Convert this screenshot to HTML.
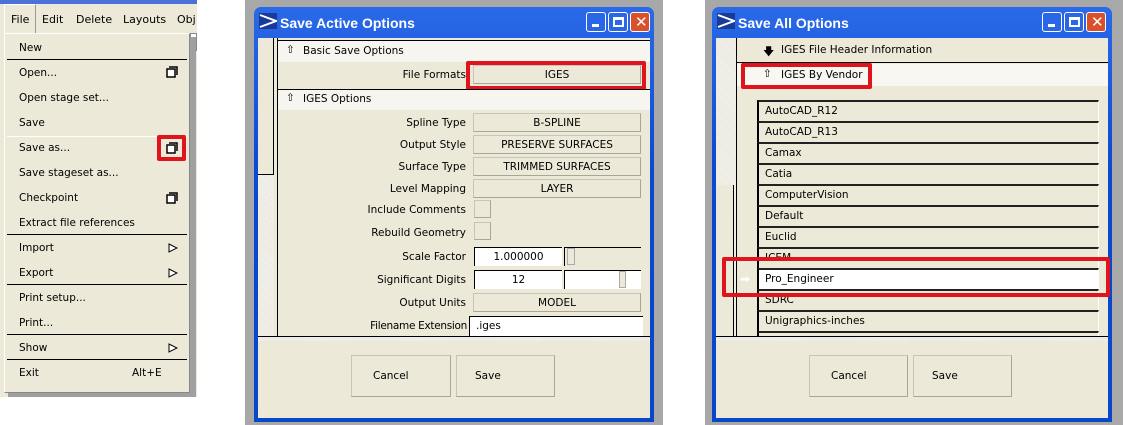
<!DOCTYPE html>
<html><head><meta charset="utf-8"><style>
*{box-sizing:border-box;margin:0;padding:0}
body{width:1123px;height:425px;background:#fff;position:relative;overflow:hidden;font-family:"DejaVu Sans","Liberation Sans",sans-serif;font-size:10.5px;color:#000}
.a{position:absolute}
.t{position:absolute;white-space:nowrap}
.menu .t{left:19px}
.sep{position:absolute;left:7px;width:180px;height:1px;background:#000}
.frame{background:#a8a8a8}
.win{background:linear-gradient(#2a6ae8,#0a49d0 40%,#0848c8);border-radius:7px 7px 0 0}
.title{color:#fff;font-weight:bold;font-family:"Liberation Sans",sans-serif;font-size:14px}
.body{background:#ece9d8}
.btn{position:absolute;background:#ece9d8;border:1px solid #c8c5b8;border-right-color:#a9a697;border-bottom-color:#a9a697;text-align:center}
.lbl{position:absolute;left:278px;width:188px;text-align:right;white-space:nowrap}
.red{position:absolute;border:4px solid #e0141c;border-radius:2px}
.tb{position:absolute;width:20px;height:20px;border:1px solid #fff;border-radius:3px;background:#2a66e8}
.li{position:absolute;left:757px;width:342px;height:21px;border-left:2px solid #000;border-top:2px solid #222;border-right:1px solid #fff;background:#ece9d8;padding:3px 0 0 6px}
.hatch{background:repeating-linear-gradient(45deg,#e8e6dc 0 1px,#f4f3ee 1px 2px)}
</style></head><body>

<!-- LEFT MENU -->
<div class="a" style="left:0;top:0;width:197px;height:397px;background:#ece9d8"></div>
<div class="a" style="left:0;top:0;width:197px;height:4px;background:#4a72d8"></div>
<div class="a" style="left:4px;top:4px;width:32px;height:29px;border:1px solid #fff;border-right-color:#999;border-bottom:none"></div>
<div class="t" style="left:11px;top:13px;font-size:11px">File</div>
<div class="t" style="left:42px;top:13px;font-size:11px">Edit</div>
<div class="t" style="left:76px;top:13px;font-size:11px">Delete</div>
<div class="t" style="left:123px;top:13px;font-size:11px">Layouts</div>
<div class="t" style="left:177px;top:13px;font-size:11px">Obj</div>
<div class="a" style="left:190px;top:33px;width:7px;height:18px;background:#fff;border:1px solid #888"></div>
<div class="a" style="left:8px;top:37px;width:188px;height:360px;background:#a0a0a0"></div>
<div class="a menu" style="left:4px;top:33px;width:186px;height:360px;background:#ece9d8;border:1px solid #fff;border-right-color:#888;border-bottom-color:#888">
</div>
<div class="menu">
<div class="t" style="top:42px">New</div>
<div class="sep" style="top:59px"></div>
<div class="t" style="top:67px">Open...</div>
<div class="t" style="top:92px">Open stage set...</div>
<div class="t" style="top:117px">Save</div>
<div class="sep" style="top:136px;background:#fff"></div>
<div class="t" style="top:142px">Save as...</div>
<div class="t" style="top:167px">Save stageset as...</div>
<div class="t" style="top:192px">Checkpoint</div>
<div class="t" style="top:217px">Extract file references</div>
<div class="sep" style="top:234px"></div>
<div class="t" style="top:242px">Import</div>
<div class="t" style="top:267px">Export</div>
<div class="sep" style="top:284px"></div>
<div class="t" style="top:292px">Print setup...</div>
<div class="t" style="top:317px">Print...</div>
<div class="sep" style="top:334px"></div>
<div class="t" style="top:342px">Show</div>
<div class="sep" style="top:359px"></div>
<div class="t" style="top:367px">Exit</div>
<div class="t" style="left:132px!important;top:367px">Alt+E</div>
</div>
<svg class="a" style="left:166px;top:66px" width="12" height="12"><rect x="1" y="3" width="8" height="8" fill="#fff" stroke="#000" stroke-width="1.5"/><path d="M3 1H11V9" fill="none" stroke="#000" stroke-width="1.5"/></svg>
<svg class="a" style="left:166px;top:142px" width="12" height="12"><rect x="1" y="3" width="8" height="8" fill="#fff" stroke="#000" stroke-width="1.5"/><path d="M3 1H11V9" fill="none" stroke="#000" stroke-width="1.5"/></svg>
<svg class="a" style="left:166px;top:192px" width="12" height="12"><rect x="1" y="3" width="8" height="8" fill="#fff" stroke="#000" stroke-width="1.5"/><path d="M3 1H11V9" fill="none" stroke="#000" stroke-width="1.5"/></svg>
<svg class="a" style="left:168px;top:243px" width="10" height="10"><path d="M1 1L9 5L1 9Z" fill="#fff" stroke="#000"/></svg>
<svg class="a" style="left:168px;top:268px" width="10" height="10"><path d="M1 1L9 5L1 9Z" fill="#fff" stroke="#000"/></svg>
<svg class="a" style="left:168px;top:343px" width="10" height="10"><path d="M1 1L9 5L1 9Z" fill="#fff" stroke="#000"/></svg>
<div class="red" style="left:157px;top:135px;width:29px;height:26px"></div>

<!-- DIALOG 1 -->
<div class="a frame" style="left:245px;top:0;width:418px;height:425px"></div>
<div class="a win" style="left:254px;top:7px;width:400px;height:415px"></div>
<svg class="a" style="left:259px;top:13px" width="18" height="16"><rect width="18" height="16" fill="#1a3a9a"/><path d="M1 2L17 8L1 14" fill="none" stroke="#fff" stroke-width="2"/></svg>
<div class="t title" style="left:280px;top:15px">Save Active Options</div>
<div class="tb" style="left:586px;top:12px"><div class="a" style="left:5px;top:11px;width:7px;height:3px;background:#fff"></div></div>
<div class="tb" style="left:608px;top:12px"><div class="a" style="left:4px;top:4px;width:11px;height:10px;border:2px solid #fff;border-top-width:3px"></div></div>
<div class="tb" style="left:630px;top:12px;background:#d9502a"><div class="t" style="left:4px;top:0;color:#fff;font-size:15px;font-family:'Liberation Sans'">✕</div></div>
<div class="a body" style="left:258px;top:38px;width:392px;height:380px"></div>
<div class="a hatch" style="left:258px;top:38px;width:16px;height:300px"></div>
<div class="a" style="left:258px;top:38px;width:16px;height:137px;border-right:1px solid #000;border-bottom:1px solid #000;background:#ece9d8"></div>
<div class="a" style="left:277px;top:38px;width:1px;height:300px;background:#000"></div>
<div class="a" style="left:278px;top:40px;width:372px;height:22px;background:#f6f5f0;border-top:1px solid #000"></div>
<div class="t" style="left:286px;top:44px">⇧</div>
<div class="t" style="left:303px;top:45px">Basic Save Options</div>
<div class="lbl" style="top:69px">File Formats</div>
<div class="btn" style="left:473px;top:65px;width:168px;height:19px;padding-top:3px">IGES</div>
<div class="red" style="left:466px;top:61px;width:180px;height:29px"></div>
<div class="a" style="left:278px;top:89px;width:372px;height:21px;background:#f6f5f0;border-top:1px solid #000"></div>
<div class="t" style="left:286px;top:92px">⇧</div>
<div class="t" style="left:303px;top:93px">IGES Options</div>
<div class="lbl" style="top:117px">Spline Type</div>
<div class="btn" style="left:473px;top:113px;width:168px;height:19px;padding-top:3px">B-SPLINE</div>
<div class="lbl" style="top:139px">Output Style</div>
<div class="btn" style="left:473px;top:135px;width:168px;height:19px;padding-top:3px">PRESERVE SURFACES</div>
<div class="lbl" style="top:161px">Surface Type</div>
<div class="btn" style="left:473px;top:157px;width:168px;height:19px;padding-top:3px">TRIMMED SURFACES</div>
<div class="lbl" style="top:183px">Level Mapping</div>
<div class="btn" style="left:473px;top:179px;width:168px;height:19px;padding-top:3px">LAYER</div>
<div class="lbl" style="top:204px">Include Comments</div>
<div class="btn" style="left:474px;top:200px;width:17px;height:18px"></div>
<div class="lbl" style="top:227px">Rebuild Geometry</div>
<div class="btn" style="left:474px;top:222px;width:17px;height:18px"></div>
<div class="lbl" style="top:251px">Scale Factor</div>
<div class="a" style="left:474px;top:247px;width:88px;height:19px;background:#fff;border-left:1px solid #000;border-top:1px solid #000;text-align:center;padding-top:3px">1.000000</div>
<div class="a" style="left:564px;top:247px;width:77px;height:19px;border-top:1px solid #000;border-left:1px solid #000"></div>
<div class="a" style="left:567px;top:248px;width:8px;height:17px;border:1px solid #aaa;background:#ece9d8"></div>
<div class="lbl" style="top:274px">Significant Digits</div>
<div class="a" style="left:474px;top:270px;width:88px;height:19px;background:#fff;border-left:1px solid #000;border-top:1px solid #000;text-align:center;padding-top:3px">12</div>
<div class="a" style="left:564px;top:270px;width:77px;height:19px;border-top:1px solid #000;border-left:1px solid #000;background:#fff"></div>
<div class="a" style="left:619px;top:271px;width:7px;height:17px;border:1px solid #aaa;background:#ece9d8"></div>
<div class="lbl" style="top:297px">Output Units</div>
<div class="btn" style="left:473px;top:293px;width:168px;height:19px;padding-top:3px">MODEL</div>
<div class="lbl" style="top:320px;width:189px;letter-spacing:-0.3px">Filename Extension</div>
<div class="a" style="left:469px;top:316px;width:174px;height:20px;background:#fff;border-left:1px solid #000;border-top:1px solid #000;padding:3px 0 0 6px">.iges</div>
<div class="a" style="left:258px;top:336px;width:392px;height:1px;background:#000"></div>
<div class="a hatch" style="left:258px;top:337px;width:392px;height:4px"></div>
<div class="btn" style="left:351px;top:355px;width:100px;height:42px;padding:14px 0 0 21px;text-align:left">Cancel</div>
<div class="btn" style="left:456px;top:355px;width:99px;height:42px;padding:14px 0 0 18px;text-align:left">Save</div>

<!-- DIALOG 2 -->
<div class="a frame" style="left:705px;top:0;width:418px;height:425px"></div>
<div class="a win" style="left:712px;top:7px;width:400px;height:415px"></div>
<svg class="a" style="left:717px;top:13px" width="18" height="16"><rect width="18" height="16" fill="#1a3a9a"/><path d="M1 2L17 8L1 14" fill="none" stroke="#fff" stroke-width="2"/></svg>
<div class="t title" style="left:738px;top:15px">Save All Options</div>
<div class="tb" style="left:1042px;top:12px"><div class="a" style="left:5px;top:11px;width:7px;height:3px;background:#fff"></div></div>
<div class="tb" style="left:1064px;top:12px"><div class="a" style="left:4px;top:4px;width:11px;height:10px;border:2px solid #fff;border-top-width:3px"></div></div>
<div class="tb" style="left:1086px;top:12px;background:#d9502a"><div class="t" style="left:4px;top:0;color:#fff;font-size:15px;font-family:'Liberation Sans'">✕</div></div>
<div class="a body" style="left:716px;top:38px;width:392px;height:380px"></div>
<div class="a hatch" style="left:716px;top:38px;width:20px;height:300px"></div>
<div class="a" style="left:716px;top:185px;width:18px;height:153px;border-right:1px solid #000;border-bottom:1px solid #000;background:#ece9d8"></div>
<div class="a" style="left:736px;top:38px;width:1px;height:300px;background:#000"></div>
<div class="a" style="left:737px;top:38px;width:371px;height:25px;background:#ece9d8;border-bottom:1px solid #000"></div>
<div class="t" style="left:763px;top:43px;font-size:11px">🡇</div>
<div class="t" style="left:781px;top:44px">IGES File Header Information</div>
<div class="a" style="left:737px;top:64px;width:371px;height:22px;background:#f8f7f2"></div>
<div class="t" style="left:763px;top:68px">⇧</div>
<div class="t" style="left:781px;top:69px">IGES By Vendor</div>
<div class="red" style="left:741px;top:63px;width:131px;height:26px"></div>
<div class="li" style="top:100px">AutoCAD_R12</div>
<div class="li" style="top:121px">AutoCAD_R13</div>
<div class="li" style="top:142px">Camax</div>
<div class="li" style="top:163px">Catia</div>
<div class="li" style="top:184px">ComputerVision</div>
<div class="li" style="top:205px">Default</div>
<div class="li" style="top:226px">Euclid</div>
<div class="li" style="top:247px">ICEM</div>
<div class="li" style="top:268px;background:#fff">Pro_Engineer</div>
<div class="li" style="top:289px">SDRC</div>
<div class="li" style="top:310px">Unigraphics-inches</div>
<div class="li" style="top:331px;height:5px"></div>
<div class="t" style="left:740px;top:272px;color:#fff;font-size:12px">➡</div>
<div class="red" style="left:722px;top:257px;width:388px;height:40px"></div>
<div class="a" style="left:716px;top:336px;width:392px;height:1px;background:#000"></div>
<div class="a hatch" style="left:716px;top:337px;width:392px;height:4px"></div>
<div class="btn" style="left:809px;top:355px;width:99px;height:42px;padding:14px 0 0 21px;text-align:left">Cancel</div>
<div class="btn" style="left:913px;top:355px;width:99px;height:42px;padding:14px 0 0 18px;text-align:left">Save</div>
</body></html>
